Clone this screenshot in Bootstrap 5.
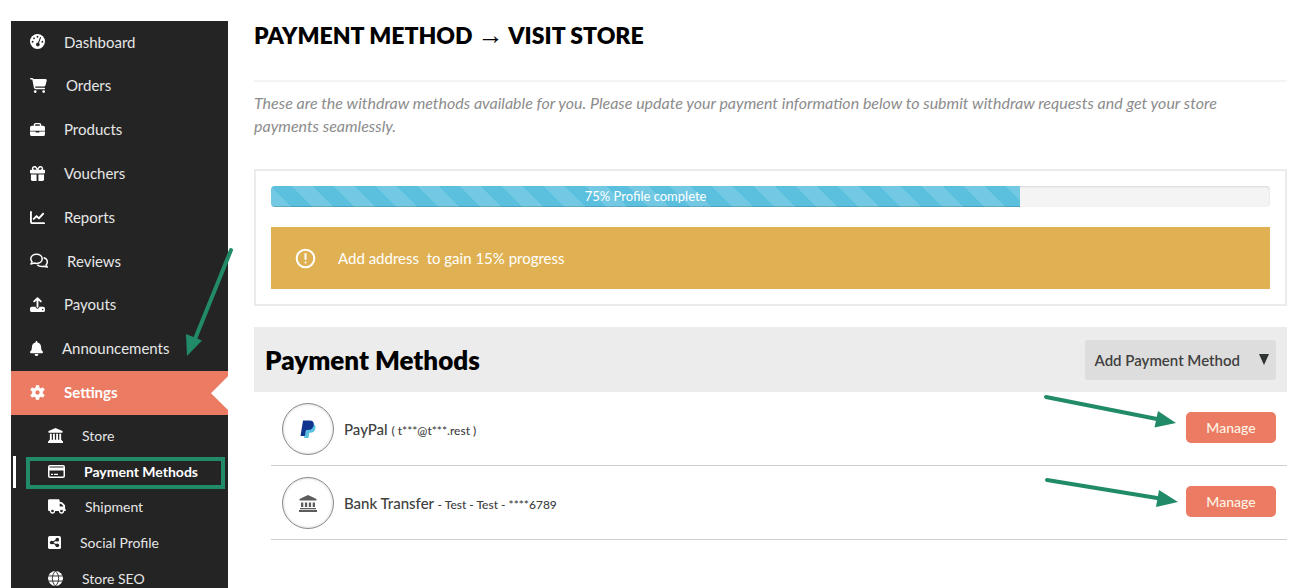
<!DOCTYPE html>
<html lang="en">
<head>
<meta charset="utf-8">
<meta name="viewport" content="width=device-width, initial-scale=1">
<title>Payment Method</title>
<link href="https://cdn.jsdelivr.net/npm/bootstrap@5.3.0/dist/css/bootstrap.min.css" rel="stylesheet">
<style>
  :root { --coral: #eb7b62; --ink: #242424; --green: #218b69; }
  body { font-family: Lato, "Open Sans", sans-serif; font-size: 15px; color: #404040; background: #fff; }
  a { text-decoration: none; color: inherit; }

  .shell { padding: 21px 13px 0 11px; gap: 26px; }

  /* sidebar */
  .side { width: 217px; background: var(--ink); color: #e6e6e6; }
  .main-menu { min-height: 394px; }
  .sub-menu { min-height: 182px; padding: 4px 0 0; }
  .main-menu li, .sub-menu li { flex: 1 1 0; }
  .side a { gap: 19px; padding-bottom: 2px; }
  .main-menu a { padding-left: 19px; }
  .sub-menu a { padding-left: 37px; font-size: 14px; }
  .side svg { fill: #fff; flex: none; }
  .current { background: var(--coral); color: #fff; font-weight: 700; }
  .current::after { content: ""; position: absolute; right: 0; top: 5px; bottom: 5px; width: 17px; background: #fff; clip-path: polygon(100% 0, 100% 100%, 0 50%); }
  .chosen { color: #fff; font-weight: 700; }
  .chosen::before { content: ""; position: absolute; left: 2px; top: 1px; bottom: 2px; width: 3px; background: #fff; }
  .frame { position: absolute; left: 15px; right: 3px; top: 2px; bottom: 1px; border: 4px solid var(--green); pointer-events: none; }

  /* pointers drawn over the page */
  .pointer { position: absolute; overflow: visible; pointer-events: none; z-index: 2; stroke: var(--green); stroke-width: 4; stroke-linecap: round; }
  .pointer .tip { fill: var(--green); stroke: none; }
  .side .pointer { right: -6px; bottom: 16px; fill: none; }
  .row-pointer { right: 110px; top: 1px; fill: none; }

  /* content */
  .page-title { font-size: 23px; line-height: 28px; font-weight: 800; color: #000; }
  .page-title .arrow { font-family: "Liberation Serif", serif; font-size: 26px; font-weight: 400; line-height: 1; }
  .title-bar { height: 61px; border-bottom: 2px solid #f4f4f4; }
  .intro { font-size: 16px; line-height: 23px; color: #8c8c8c; margin: 9px 0 32px; padding-right: 24px; }
  .profile-box { border: 2px solid #ebebeb; padding: 15px; }
  .profile-box .progress { height: 21px; border-radius: 4px; background: #f4f4f4; font-size: 13px; margin-bottom: 20px; box-shadow: inset 0 1px 2px rgba(0,0,0,.12); }
  .profile-box .progress-bar { background-color: #5bc0de; color: #fff; box-shadow: inset 0 -1px 0 rgba(0,0,0,.15);
    background-size: 42px 42px; background-image: linear-gradient(45deg, transparent 25%, rgba(255,255,255,.15) 25%, rgba(255,255,255,.15) 50%, transparent 50%, transparent 75%, rgba(255,255,255,.15) 75%); }
  .notice { background: #e0b152; color: #fff; padding: 20px 24px; gap: 22px; line-height: 22px; white-space: pre-wrap; }
  .methods-head { background: #ececec; margin-top: 21px; padding: 13px 11px 12px; }
  .methods-head h2 { font-size: 26px; line-height: 32px; font-weight: 800; color: #000; }
  .btn-add { background: #ddd; color: #404040; font-size: 15px; font-weight: 600; line-height: 22px; padding: 9px 6px 9px 10px; border-radius: 3px; gap: 18px; border: 0; }
  .methods { margin: 0 0 0 17px; }
  .methods li { border-bottom: 1px solid #cfcfcf; padding: 11px 11px 10px; gap: 10px; }
  .disc { width: 52px; height: 52px; border: 1px solid #8a8a8a; border-radius: 50%; box-shadow: inset 0 0 3px rgba(0,0,0,.2); }
  .method-name { font-size: 15px; font-weight: 500; }
  .detail { font-size: 12px; }
  .btn-manage { background: var(--coral); color: #fff4e6; width: 90px; font-size: 14px; font-weight: 500; line-height: 19px; padding: 6px; border: 0; border-radius: 5px; margin-bottom: 3px; }
  .btn-manage:hover { background: #d9684f; color: #fff; }
</style>
</head>
<body>
<div class="shell d-flex vh-100 overflow-hidden">
  <nav class="side flex-shrink-0 position-relative" aria-label="Store">
    <ul class="main-menu list-unstyled d-flex flex-column m-0">
      <li class="d-flex"><a class="d-flex align-items-center flex-fill" href="#"><svg width="15" height="15" viewBox="0 0 16 16"><circle cx="8" cy="8" r="8"/><g fill="#242424"><circle cx="8" cy="2.9" r="1"/><circle cx="4.3" cy="4.6" r="1"/><circle cx="2.8" cy="8.2" r="1"/><circle cx="13.2" cy="8.2" r="1"/><path d="M10.600 3.600a.6.6 0 0 1 1.100.5L9.600 9.600a2 2 0 1 1-1.100-.4z"/></g></svg>Dashboard</a></li>
      <li class="d-flex"><a class="d-flex align-items-center flex-fill" href="#"><svg width="17" height="15" viewBox="0 0 576 512"><path d="M0 24C0 10.700 10.700 0 24 0h45.500c22 0 41.500 12.800 50.600 32h411c26.300 0 45.500 25 38.600 50.400l-41 152.300c-8.500 31.400-37 53.300-69.500 53.300H170.700l5.400 28.500c2.200 11.300 12.100 19.500 23.600 19.500H488c13.300 0 24 10.700 24 24s-10.700 24-24 24H199.700c-34.600 0-64.300-24.600-70.700-58.500L77.400 54.500c-.7-3.800-4-6.500-7.900-6.500H24C10.700 48 0 37.300 0 24zM128 464a48 48 0 1 1 96 0 48 48 0 1 1-96 0zm336-48a48 48 0 1 1 0 96 48 48 0 1 1 0-96z"/></svg>Orders</a></li>
      <li class="d-flex"><a class="d-flex align-items-center flex-fill" href="#"><svg width="15" height="15" viewBox="0 0 16 16"><path fill-rule="evenodd" d="M4 4V3a2 2 0 0 1 2-2h4a2 2 0 0 1 2 2v1h2a2 2 0 0 1 2 2v3.200H0V6a2 2 0 0 1 2-2zm1.500 0h5V3a.5.5 0 0 0-.5-.5H6a.5.5 0 0 0-.5.5zM0 10h6v.600a.6.6 0 0 0 .6.600h2.800a.6.6 0 0 0 .6-.6V10h6v3a2 2 0 0 1-2 2H2a2 2 0 0 1-2-2z"/></svg>Products</a></li>
      <li class="d-flex"><a class="d-flex align-items-center flex-fill" href="#"><svg width="15" height="15" viewBox="0 0 512 512"><path d="M190.500 68.800L225.300 128H152c-22.100 0-40-17.900-40-40s17.900-40 40-40h2.200c14.900 0 28.800 7.900 36.300 20.800zM64 88c0 14.400 3.500 28 9.600 40H32c-17.700 0-32 14.300-32 32v64c0 17.700 14.300 32 32 32H480c17.700 0 32-14.300 32-32V160c0-17.700-14.300-32-32-32H438.400c6.100-12 9.600-25.600 9.600-40c0-48.600-39.400-88-88-88h-2.200c-31.900 0-61.500 16.900-77.700 44.400L256 85.500l-24.100-41C215.700 16.900 186.100 0 154.200 0H152C103.400 0 64 39.400 64 88zm336 0c0 22.100-17.900 40-40 40H286.700l34.800-59.200C329.100 55.900 342.900 48 357.800 48H360c22.100 0 40 17.900 40 40zM32 288V464c0 26.500 21.500 48 48 48H224V288H32zM288 512H432c26.500 0 48-21.500 48-48V288H288V512z"/></svg>Vouchers</a></li>
      <li class="d-flex"><a class="d-flex align-items-center flex-fill" href="#"><svg width="15" height="15" viewBox="0 0 16 16"><path d="M1 2v10.500A1.500 1.500 0 0 0 2.500 14H15M4 9.500l3-3 2.500 2.500L14 4" style="fill:none;stroke:#fff;stroke-width:2;stroke-linecap:round;stroke-linejoin:round"/></svg>Reports</a></li>
      <li class="d-flex"><a class="d-flex align-items-center flex-fill" href="#"><svg width="18" height="16" viewBox="0 0 18 16"><g style="fill:none;stroke:#fff;stroke-width:1.500;stroke-linejoin:round"><path d="M6.500 1.200c3.300 0 5.700 2 5.700 4.600s-2.400 4.600-5.700 4.600c-.9 0-1.700-.1-2.400-.4-.9.600-2 .9-3.200.9.600-.7 1-1.400 1.200-2.200C1.200 7.900.8 6.900.8 5.800.8 3.200 3.200 1.200 6.500 1.200z"/><path d="M13.600 4.800c2.200.5 3.700 2.100 3.700 4.200 0 1.100-.4 2.100-1.200 2.900.2.800.6 1.500 1.200 2.200-1.200 0-2.300-.3-3.200-.9-.7.300-1.500.4-2.300.4-1.900 0-3.500-.7-4.500-1.800"/></g></svg>Reviews</a></li>
      <li class="d-flex"><a class="d-flex align-items-center flex-fill" href="#"><svg width="15" height="15" viewBox="0 0 16 16"><path d="M8 10.500V1.500M4.500 4.700L8 1.300l3.500 3.400" style="fill:none;stroke:#fff;stroke-width:2;stroke-linecap:round;stroke-linejoin:round"/><path fill-rule="evenodd" d="M2 10.500h4c0 1.200.9 2 2 2s2-.8 2-2h4a2 2 0 0 1 2 2V14a2 2 0 0 1-2 2H2a2 2 0 0 1-2-2v-1.500a2 2 0 0 1 2-2zm11.500 2a.8.8 0 1 0 0 1.600.8.8 0 0 0 0-1.600z"/></svg>Payouts</a></li>
      <li class="d-flex position-relative"><a class="d-flex align-items-center flex-fill" href="#"><svg width="13" height="15" viewBox="0 0 448 512"><path d="M224 0c-17.700 0-32 14.300-32 32V51.200C119 66 64 130.600 64 208v18.800c0 47-17.300 92.400-48.500 127.600l-7.400 8.300c-8.400 9.400-10.400 22.900-5.300 34.400S19.400 416 32 416H416c12.600 0 24-7.400 29.200-18.900s3.100-25-5.300-34.400l-7.400-8.300C401.300 319.200 384 273.900 384 226.800V208c0-77.400-55-142-128-156.800V32c0-17.700-14.300-32-32-32zm45.300 493.300c12-12 18.700-28.300 18.700-45.300H160c0 17 6.700 33.300 18.700 45.300s28.300 18.700 45.300 18.700s33.300-6.700 45.300-18.700z"/></svg>Announcements</a>
        <svg class="pointer" width="48" height="108" viewBox="0 0 48 108" aria-hidden="true"><path d="M45 3L9 92"/><path class="tip" d="M1 109L0 87 16 93.500z"/></svg></li>
      <li class="d-flex current position-relative"><a class="d-flex align-items-center flex-fill" href="#"><svg width="15" height="15" viewBox="0 0 16 16"><g transform="translate(8 8)"><circle r="4" style="fill:none;stroke:#fff;stroke-width:3.400"/><path id="tooth" d="M-1.900-5L-1.300-7.700H1.300L1.900-5z" stroke="#fff" stroke-width=".6" stroke-linejoin="round"/><use href="#tooth" transform="rotate(60)"/><use href="#tooth" transform="rotate(120)"/><use href="#tooth" transform="rotate(180)"/><use href="#tooth" transform="rotate(240)"/><use href="#tooth" transform="rotate(300)"/></g></svg>Settings</a></li>
    </ul>
    <ul class="sub-menu list-unstyled d-flex flex-column m-0">
      <li class="d-flex"><a class="d-flex align-items-center flex-fill" href="#"><svg width="15" height="15" viewBox="0 0 16 16"><path d="M8 0l7.300 3.200a.6.6 0 0 1 .3.600V4.500a.5.5 0 0 1-.5.500H.9a.5.5 0 0 1-.5-.5v-.7a.6.6 0 0 1 .3-.6zM2 6h2v6.500h1.300V6h2v6.500h1.400V6h2v6.500H12V6h2v6.500a1 1 0 0 1 1 1v.3h.3a.7.7 0 0 1 .7.700V16H0v-1.500a.7.7 0 0 1 .7-.7H1v-.3a1 1 0 0 1 1-1z"/></svg>Store</a></li>
      <li class="d-flex chosen position-relative"><a class="d-flex align-items-center flex-fill" href="#"><svg width="17" height="15" viewBox="0 0 17 15"><path fill-rule="evenodd" d="M2 1h13a2 2 0 0 1 2 2v9a2 2 0 0 1-2 2H2a2 2 0 0 1-2-2V3a2 2 0 0 1 2-2zm-.5 2.500h14V3a.5.5 0 0 0-.5-.5H2a.5.5 0 0 0-.5.500zm0 3V12a.5.5 0 0 0 .5.500h13a.5.5 0 0 0 .5-.5V6.500zM3 9.800h2v1.300H3zm3 0h4v1.300H6z"/></svg>Payment Methods</a><span class="frame"></span></li>
      <li class="d-flex"><a class="d-flex align-items-center flex-fill" href="#"><svg width="18" height="15" viewBox="0 0 640 512"><path fill-rule="evenodd" d="M48 0C21.500 0 0 21.500 0 48V368c0 26.500 21.500 48 48 48H64c0 53 43 96 96 96s96-43 96-96H384c0 53 43 96 96 96s96-43 96-96h32c17.700 0 32-14.300 32-32s-14.300-32-32-32V288 256 237.300c0-17-6.700-33.300-18.700-45.300L512 114.700c-12-12-28.300-18.700-45.300-18.700H416V48c0-26.500-21.500-48-48-48H48zM416 160h50.700L544 237.300V256H416V160zM112 416a48 48 0 1 1 96 0 48 48 0 1 1-96 0zm368-48a48 48 0 1 1 0 96 48 48 0 1 1 0-96z"/></svg>Shipment</a></li>
      <li class="d-flex"><a class="d-flex align-items-center flex-fill" href="#"><svg width="13" height="13" viewBox="0 0 14 14"><rect width="14" height="14" rx="2"/><g fill="#242424"><circle cx="10" cy="4" r="2"/><circle cx="10" cy="10" r="2"/><circle cx="4" cy="7" r="2"/><path d="M10 4L4 7l6 3" style="fill:none;stroke:#242424;stroke-width:1.200"/></g></svg>Social Profile</a></li>
      <li class="d-flex"><a class="d-flex align-items-center flex-fill" href="#"><svg width="15" height="15" viewBox="0 0 16 16"><circle cx="8" cy="8" r="8"/><path d="M0 5.300h16M0 10.700h16M8 0C3.500 4.500 3.500 11.500 8 16M8 0c4.500 4.500 4.500 11.500 0 16" style="fill:none;stroke:#242424;stroke-width:1"/></svg>Store SEO</a></li>
    </ul>
  </nav>

  <main class="flex-fill">
    <header class="title-bar">
      <h1 class="page-title m-0">PAYMENT METHOD <a href="#"><span class="arrow">→</span> VISIT STORE</a></h1>
    </header>
    <p class="intro fst-italic">These are the withdraw methods available for you. Please update your payment information below to submit withdraw requests and get your store payments seamlessly.</p>

    <section class="profile-box">
      <div class="progress" role="progressbar" aria-label="Profile completeness" aria-valuenow="75" aria-valuemin="0" aria-valuemax="100">
        <div class="progress-bar" style="width: 75%">75% Profile complete</div>
      </div>
      <div class="notice d-flex align-items-center"><svg width="21" height="21" viewBox="0 0 21 21" fill="none" stroke="#fff" stroke-width="2" stroke-linecap="round"><circle cx="10.500" cy="10.500" r="8.800"/><path d="M10.500 6v5M10.500 14.500v.1"/></svg><a href="#">Add address  to gain 15% progress</a></div>
    </section>

    <section>
      <div class="methods-head d-flex align-items-center justify-content-between">
        <h2 class="m-0">Payment Methods</h2>
        <button type="button" class="btn btn-add d-flex align-items-center">Add Payment Method<svg width="12" height="12" viewBox="0 0 12 12" fill="#2c3434"><path d="M1 0h10L6 11z"/></svg></button>
      </div>
      <ul class="methods list-unstyled">
        <li class="d-flex align-items-center position-relative">
          <span class="disc d-flex align-items-center justify-content-center"><svg width="16" height="19" viewBox="0 0 16 19"><path fill="#5bbfe0" d="M13.500 4c2.200 1.200 2.300 3.300 1.700 5.200-.7 2.400-2.500 3.600-5 3.600H9.300L8.500 18H4l2-9z"/><path fill="#10358f" d="M3 .5h6.500c3 0 4.700 1.500 4.300 4.300-.5 3.500-2.700 5.200-6 5.200H6l-1.200 6H.5z"/></svg></span>
          <span class="method-name flex-fill">PayPal <span class="detail">( t***@t***.rest )</span></span>
          <svg class="pointer row-pointer" width="134" height="38" viewBox="0 0 134 38" aria-hidden="true"><path d="M3 4L114 26"/><path class="tip" d="M133 30L111.500 34.500 115 18z"/></svg>
          <button type="button" class="btn btn-manage">Manage</button>
        </li>
        <li class="d-flex align-items-center position-relative">
          <span class="disc d-flex align-items-center justify-content-center"><svg width="18" height="17" viewBox="0 0 18 17" fill="#5c5c5c"><path d="M9 0l8.500 4v1.500H.5V4zM2 7.500h2.300V12H2zm3.900 0h2.300V12H5.900zm3.900 0h2.300V12H9.800zm3.900 0H16V12h-2.300zM1 13h16v1.200H1zM0 15h18v2H0z"/></svg></span>
          <span class="method-name flex-fill">Bank Transfer <span class="detail">- Test - Test - ****6789</span></span>
          <svg class="pointer row-pointer" width="134" height="38" viewBox="0 0 134 38" aria-hidden="true"><path d="M4 13L114 31"/><path class="tip" d="M135 35L113 40 116 23z"/></svg>
          <button type="button" class="btn btn-manage">Manage</button>
        </li>
      </ul>
    </section>
  </main>
</div>
<script src="https://cdn.jsdelivr.net/npm/bootstrap@5.3.0/dist/js/bootstrap.bundle.min.js"></script>
</body>
</html>
